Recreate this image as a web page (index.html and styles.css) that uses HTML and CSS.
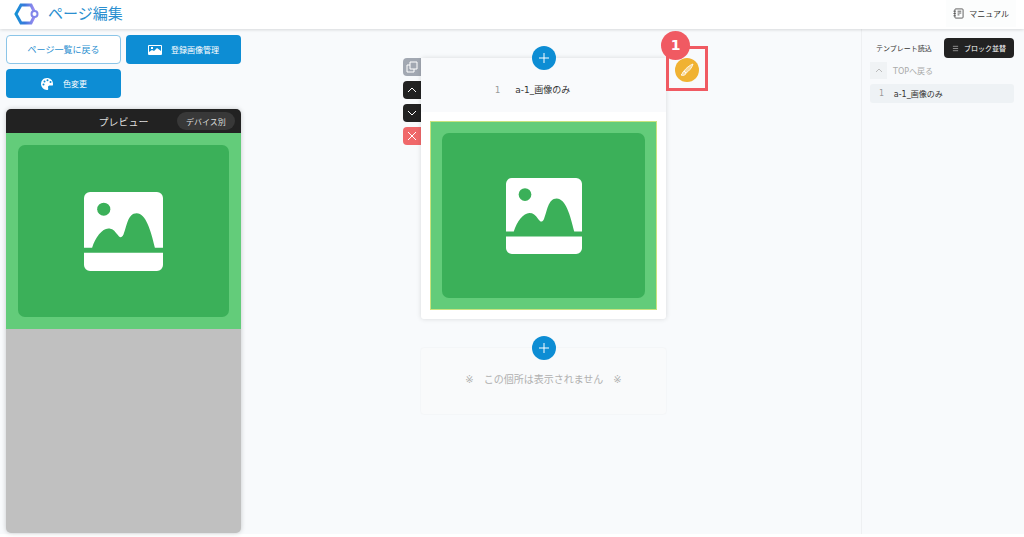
FILE: index.html
```html
<!DOCTYPE html>
<html lang="ja">
<head>
	<meta charset="utf-8">
	<meta name="viewport" content="width=device-width, initial-scale=1.0">
	<title>ページ編集</title>
	<link rel="stylesheet" href="styles.css">
</head>
<body>
	<svg class="defs" aria-hidden="true">
		<symbol id="noimage" viewBox="0 0 78 78">
			<path fill="#fff" d="M6 0H72A6 6 0 0 1 78 6V55H70C66 38 61 21 52 21S42 35 39 42C37 46 35 45 33 42C30 38 28 36 24 36C18 36 11 45 8 55H0V6A6 6 0 0 1 6 0ZM0 60H78V72A6 6 0 0 1 72 78H6A6 6 0 0 1 0 72Z"/>
			<circle cx="19.500" cy="17" r="6.500" fill="#3bb059"/>
		</symbol>
	</svg>

	<header class="header">
		<svg class="logo" viewBox="0 0 26 22" fill="none">
			<defs>
				<linearGradient id="logoGrad" x1="0" x2="1">
					<stop offset="0" stop-color="#1592d6"/>
					<stop offset="0.5" stop-color="#3c78dc"/>
					<stop offset="1" stop-color="#9b8cf0"/>
				</linearGradient>
			</defs>
			<path stroke="url(#logoGrad)" stroke-width="3" d="M20 8L17 2H7L2 11L7 20H17L20 14"/>
			<circle cx="20.500" cy="11" r="3" stroke="#8186ea" stroke-width="2"/>
		</svg>
		<h1>ページ編集</h1>
		<a class="manual" href="#">
			<svg viewBox="0 0 12 12" fill="none" stroke="#555"><rect x="2" y="1" width="9" height="10" rx="1"/><path d="M0.500 3.500H3M0.500 6H3M0.500 8.500H3M5 3.500H9M5 5.500H9M5 7.500H7"/></svg>
			マニュアル
		</a>
	</header>

	<div class="layout">
		<aside class="left">
			<nav class="actions">
				<button type="button" class="btn btn-outline">ページ一覧に戻る</button>
				<button type="button" class="btn">
					<svg viewBox="0 0 14 12"><path fill="#fff" fill-rule="evenodd" d="M1 1H13Q14 1 14 2V10Q14 11 13 11H1Q0 11 0 10V2Q0 1 1 1ZM1 2V8L4 6L6 7L9 4L13 7V2ZM3 3H5V5H3Z"/></svg>
					登録画像管理
				</button>
				<button type="button" class="btn">
					<svg viewBox="0 0 14 14"><path fill="#fff" d="M7 1C3 1 1 4 1 7S4 13 7 13C9 13 8 11 8 10C8 9 9 8.500 10 8.500H12C13 8.500 13 8 13 7C13 3 10 1 7 1Z"/><g fill="#0d8dd4"><circle cx="3.500" cy="7.500" r="1"/><circle cx="4.500" cy="4.500" r="1"/><circle cx="7.500" cy="3.200" r="1"/><circle cx="10.500" cy="5" r="1"/></g></svg>
					色変更
				</button>
			</nav>
			<section class="preview">
				<div class="preview-head">
					<h2>プレビュー</h2>
					<button type="button" class="device">デバイス別</button>
				</div>
				<div class="noimage"><div class="noimage-inner"><svg><use href="#noimage"/></svg></div></div>
			</section>
		</aside>

		<main class="editor">
			<div class="row">
				<div class="tools">
					<button type="button" class="tool copy" aria-label="複製"><svg viewBox="0 0 12 12"><path d="M4 1H11V8H4ZM4 4H1V11H8V8"/></svg></button>
					<button type="button" class="tool" aria-label="上へ"><svg viewBox="0 0 12 12"><path d="M2 8L6 4L10 8"/></svg></button>
					<button type="button" class="tool" aria-label="下へ"><svg viewBox="0 0 12 12"><path d="M2 4L6 8L10 4"/></svg></button>
					<button type="button" class="tool delete" aria-label="削除"><svg viewBox="0 0 12 12"><path d="M2 2L10 10M10 2L2 10"/></svg></button>
				</div>
				<section class="card">
					<button type="button" class="add" aria-label="追加"><svg viewBox="0 0 12 12"><path d="M6 1V11M1 6H11"/></svg></button>
					<div class="card-head"><span class="num">1</span><span>a-1_画像のみ</span></div>
					<div class="card-body">
						<div class="noimage"><div class="noimage-inner"><svg><use href="#noimage"/></svg></div></div>
					</div>
				</section>
				<div class="side">
					<div class="marker">
						<span class="marker-num">1</span>
						<button type="button" class="brush" aria-label="デザイン"><svg viewBox="0 0 14 14"><path fill="#fff" fill-opacity="0.5" stroke="#fff" stroke-width="0.800" d="M13 1C10 2 6 5 4 8L6 10C9 8 12 5 13 1ZM4 8C2 9 3 11 1 12C3 13 6 12 6 10Z"/></svg></button>
					</div>
				</div>
			</div>
			<div class="row">
				<div class="tools"></div>
				<section class="card empty">
					<button type="button" class="add" aria-label="追加"><svg viewBox="0 0 12 12"><path d="M6 1V11M1 6H11"/></svg></button>
					<p>※　この個所は表示されません　※</p>
				</section>
				<div class="side"></div>
			</div>
		</main>

		<aside class="right">
			<div class="right-head">
				<a href="#">テンプレート読込</a>
				<button type="button" class="sort">
					<svg viewBox="0 0 8 8" fill="none" stroke="#999"><path d="M1 1.500H7M1 4H7M1 6.500H7"/></svg>
					ブロック並替
				</button>
			</div>
			<a class="totop" href="#"><span class="totop-icon"><svg viewBox="0 0 12 12"><path d="M3 7L6 4L9 7"/></svg></span>TOPへ戻る</a>
			<a class="block" href="#"><span class="num">1</span>a-1_画像のみ</a>
		</aside>
	</div>
</body>
</html>
```
FILE: styles.css
```css
* {
	box-sizing: border-box;
}

body {
	font-family: "DejaVu Sans", "Noto Sans CJK JP", sans-serif;
	font-size: 8px;
	color: #333;
	background: #fff;
	margin: 0;
	min-height: 100vh;
	display: flex;
	flex-direction: column;
	padding-bottom: 3px;
}

h1, h2, p {
	margin: 0;
	font-weight: normal;
}

a {
	color: inherit;
	text-decoration: none;
}

button {
	font: inherit;
	border: none;
	padding: 0;
	display: flex;
	align-items: center;
	justify-content: center;
	cursor: pointer;
}

.defs {
	position: absolute;
	width: 0;
	height: 0;
}

/* header */
.header {
	height: 29px;
	display: flex;
	align-items: center;
	padding: 0 8px 2px 14px;
	box-shadow: 0 1px 3px #0002;
	position: relative;
}
.logo {
	width: 26px;
	height: 22px;
	margin-right: 8px;
}
.header h1 {
	font-size: 15px;
	line-height: 24px;
	color: #2b8fd0;
}
.manual {
	margin-left: auto;
	display: flex;
	align-items: center;
	gap: 5px;
	height: 27px;
	padding: 0 7px;
	background: #fcfdfd;
}
.manual svg {
	width: 11px;
	height: 11px;
}

.layout {
	flex: 1;
	display: grid;
	grid-template-columns: 248px 1fr 163px;
	background: #f8fafc;
}

/* left column */
.left {
	display: flex;
	flex-direction: column;
	gap: 11px;
	padding: 6px 7px 1px 6px;
}
.actions {
	display: grid;
	grid-template-columns: 1fr 1fr;
	gap: 5px;
}
.btn {
	height: 29px;
	gap: 9px;
	border-radius: 4px;
	background: #0d8dd4;
	color: #fff;
}
.btn svg {
	width: 14px;
	height: 14px;
}
.btn-outline {
	font-size: 9px;
	background: #fff;
	color: #2b8fd0;
	border: 1px solid #8bc5e8;
}
.preview {
	flex: 1;
	background: #c0c0c0;
	border-radius: 5px;
	overflow: hidden;
	box-shadow: 0 0 5px #0003;
}
.preview-head {
	display: grid;
	grid-template-columns: 1fr auto 1fr;
	align-items: center;
	height: 24px;
	padding: 0 6px;
	background: #222;
	color: #ddd;
}
.preview-head h2 {
	grid-column: 2;
	font-size: 10px;
}
.device {
	justify-self: end;
	width: 58px;
	height: 18px;
	border-radius: 9px;
	background: #383838;
	color: #ddd;
}

.noimage {
	background: #63cc7a;
	padding: 12px;
}
.noimage-inner {
	height: 172px;
	display: flex;
	align-items: center;
	justify-content: center;
	border-radius: 7px;
	background: #3bb059;
}
.noimage svg {
	width: 79px;
	height: 79px;
}

/* editor */
.editor {
	padding-top: 29px;
}
.row {
	display: flex;
	justify-content: center;
	margin-bottom: 29px;
}
.tools {
	width: 18px;
	display: flex;
	flex-direction: column;
	gap: 5px;
}
.tool {
	height: 18px;
	border-radius: 4px 0 0 4px;
	background: #222;
}
.tool svg, .add svg, .totop svg {
	width: 12px;
	height: 12px;
	fill: none;
	stroke: #fff;
}
.tool.copy {
	background: #a2a8b2;
}
.tool.delete {
	background: #f0686a;
}
.card {
	position: relative;
	width: 245px;
	border-radius: 3px;
	background: #fff;
	box-shadow: 0 0 5px #0002;
}
.add {
	position: absolute;
	top: -12px;
	left: 50%;
	margin-left: -12px;
	width: 24px;
	height: 24px;
	border-radius: 50%;
	background: #0d8dd4;
}
.card-head {
	display: flex;
	align-items: center;
	justify-content: center;
	gap: 15px;
	height: 54px;
	padding: 9px 22px 0 0;
	font-size: 9px;
	background: #f9fafc;
}
.num {
	font-family: "DejaVu Sans Mono", monospace;
	color: #999;
}
.card-body {
	padding: 9px;
}
.card .noimage {
	border: 1px solid #c9e37e;
	padding: 11px;
}
.card .noimage-inner {
	height: 165px;
}
.card .noimage svg {
	width: 76px;
	height: 76px;
}
.side {
	width: 40px;
}
.marker {
	position: relative;
	display: flex;
	align-items: center;
	justify-content: center;
	width: 42px;
	height: 45px;
	margin-top: -12px;
	padding-top: 2px;
	border: 3px solid #f05a62;
}
.marker-num {
	position: absolute;
	top: -18px;
	left: -8px;
	width: 29px;
	height: 29px;
	border-radius: 50%;
	background: #f05a62;
	color: #fff;
	font-size: 14px;
	font-weight: bold;
	line-height: 29px;
	text-align: center;
}
.brush {
	width: 24px;
	height: 24px;
	border-radius: 50%;
	background: #f0b232;
}
.brush svg {
	width: 14px;
	height: 14px;
}
.empty {
	height: 66px;
	background: #f9fafb;
	box-shadow: 0 0 2px #0001;
}
.empty p {
	padding-top: 24px;
	font-size: 10px;
	line-height: 16px;
	text-align: center;
	color: #b0b0b0;
}

/* right column */
.right {
	padding: 9px 10px 0 8px;
	border-left: 1px solid #eef0f2;
}
.right-head {
	display: flex;
	align-items: center;
	justify-content: space-between;
	padding-left: 6px;
	font-size: 7px;
}
.sort {
	width: 70px;
	height: 20px;
	gap: 5px;
	border-radius: 4px;
	background: #222;
	color: #fff;
}
.sort svg {
	width: 7px;
	height: 7px;
}
.totop {
	display: flex;
	align-items: center;
	gap: 6px;
	margin-top: 4px;
	color: #aaa;
}
.totop-icon {
	display: flex;
	align-items: center;
	justify-content: center;
	width: 17px;
	height: 17px;
	background: #f0f3f5;
}
.totop svg {
	stroke: #bbb;
}
.block {
	display: flex;
	align-items: center;
	gap: 10px;
	height: 19px;
	margin-top: 5px;
	padding-left: 9px;
	border-radius: 3px;
	background: #eef2f5;
}
```
